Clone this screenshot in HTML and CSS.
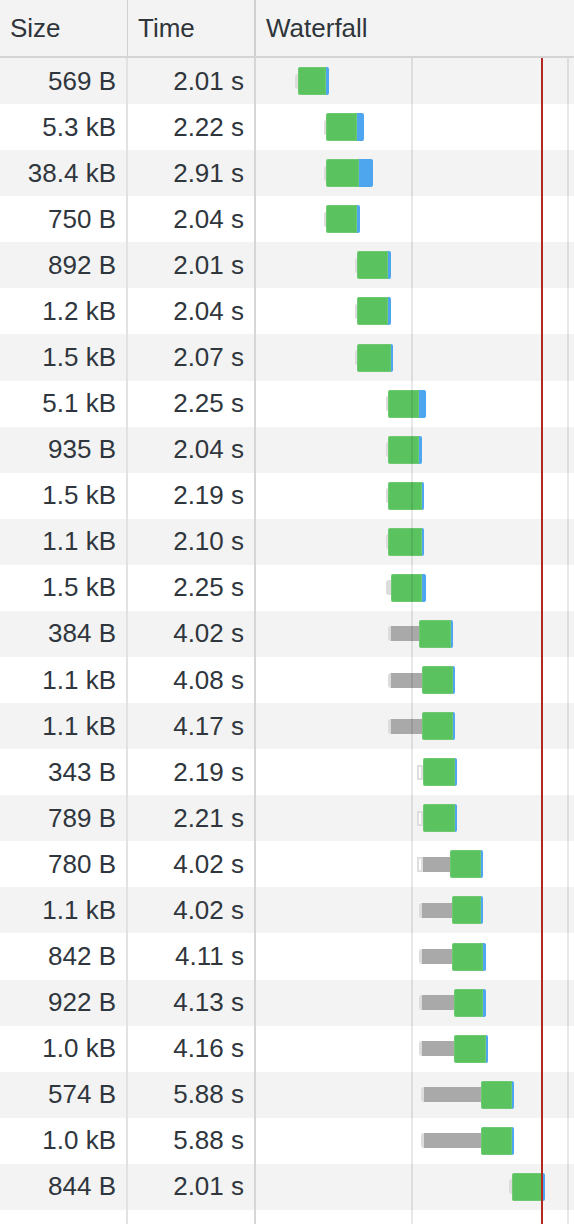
FILE: index.html
```html
<!DOCTYPE html>
<html>
<head>
<meta charset="utf-8">
<link rel="stylesheet" href="styles.css">
</head>
<body>
<div class="table">
  <div class="header">
    <div class="hc c1">Size</div>
    <div class="hc c2">Time</div>
    <div class="hc c3">Waterfall</div>
  </div>
  <div class="tbody">
    <div class="row"><div class="c c1">569 B</div><div class="c c2">2.01 s</div><div class="c c3"><div class="bar" style="left:39px"><i class="stub" style="width:3px"></i><i class="g" style="width:28px"></i><i class="b" style="width:3px"></i></div></div></div>
    <div class="row"><div class="c c1">5.3 kB</div><div class="c c2">2.22 s</div><div class="c c3"><div class="bar" style="left:68px"><i class="stub" style="width:2px"></i><i class="g" style="width:31px"></i><i class="b" style="width:7px"></i></div></div></div>
    <div class="row"><div class="c c1">38.4 kB</div><div class="c c2">2.91 s</div><div class="c c3"><div class="bar" style="left:68px"><i class="stub" style="width:2px"></i><i class="g" style="width:33px"></i><i class="b" style="width:14px"></i></div></div></div>
    <div class="row"><div class="c c1">750 B</div><div class="c c2">2.04 s</div><div class="c c3"><div class="bar" style="left:68px"><i class="stub" style="width:2px"></i><i class="g" style="width:31px"></i><i class="b" style="width:3px"></i></div></div></div>
    <div class="row"><div class="c c1">892 B</div><div class="c c2">2.01 s</div><div class="c c3"><div class="bar" style="left:99px"><i class="stub" style="width:2px"></i><i class="g" style="width:31px"></i><i class="b" style="width:3px"></i></div></div></div>
    <div class="row"><div class="c c1">1.2 kB</div><div class="c c2">2.04 s</div><div class="c c3"><div class="bar" style="left:99px"><i class="stub" style="width:2px"></i><i class="g" style="width:31px"></i><i class="b" style="width:3px"></i></div></div></div>
    <div class="row"><div class="c c1">1.5 kB</div><div class="c c2">2.07 s</div><div class="c c3"><div class="bar" style="left:99px"><i class="stub" style="width:2px"></i><i class="g" style="width:34px"></i><i class="b" style="width:2px"></i></div></div></div>
    <div class="row"><div class="c c1">5.1 kB</div><div class="c c2">2.25 s</div><div class="c c3"><div class="bar" style="left:130px"><i class="stub" style="width:2px"></i><i class="g" style="width:31px"></i><i class="b" style="width:7px"></i></div></div></div>
    <div class="row"><div class="c c1">935 B</div><div class="c c2">2.04 s</div><div class="c c3"><div class="bar" style="left:130px"><i class="stub" style="width:2px"></i><i class="g" style="width:31px"></i><i class="b" style="width:3px"></i></div></div></div>
    <div class="row"><div class="c c1">1.5 kB</div><div class="c c2">2.19 s</div><div class="c c3"><div class="bar" style="left:130px"><i class="stub" style="width:2px"></i><i class="g" style="width:34px"></i><i class="b" style="width:2px"></i></div></div></div>
    <div class="row"><div class="c c1">1.1 kB</div><div class="c c2">2.10 s</div><div class="c c3"><div class="bar" style="left:130px"><i class="stub" style="width:2px"></i><i class="g" style="width:34px"></i><i class="b" style="width:2px"></i></div></div></div>
    <div class="row"><div class="c c1">1.5 kB</div><div class="c c2">2.25 s</div><div class="c c3"><div class="bar" style="left:130px"><i class="stub" style="width:5px"></i><i class="g" style="width:31px"></i><i class="b" style="width:4px"></i></div></div></div>
    <div class="row"><div class="c c1">384 B</div><div class="c c2">4.02 s</div><div class="c c3"><div class="bar" style="left:132px"><i class="stub" style="width:3px"></i><i class="w" style="width:28px"></i><i class="g" style="width:32px"></i><i class="b" style="width:2px"></i></div></div></div>
    <div class="row"><div class="c c1">1.1 kB</div><div class="c c2">4.08 s</div><div class="c c3"><div class="bar" style="left:132px"><i class="stub" style="width:3px"></i><i class="w" style="width:31px"></i><i class="g" style="width:31px"></i><i class="b" style="width:2px"></i></div></div></div>
    <div class="row"><div class="c c1">1.1 kB</div><div class="c c2">4.17 s</div><div class="c c3"><div class="bar" style="left:132px"><i class="stub" style="width:3px"></i><i class="w" style="width:31px"></i><i class="g" style="width:31px"></i><i class="b" style="width:2px"></i></div></div></div>
    <div class="row"><div class="c c1">343 B</div><div class="c c2">2.19 s</div><div class="c c3"><div class="bar" style="left:161px"><i class="q" style="width:6px"></i><i class="g" style="width:32px"></i><i class="b" style="width:2px"></i></div></div></div>
    <div class="row"><div class="c c1">789 B</div><div class="c c2">2.21 s</div><div class="c c3"><div class="bar" style="left:161px"><i class="q" style="width:6px"></i><i class="g" style="width:32px"></i><i class="b" style="width:2px"></i></div></div></div>
    <div class="row"><div class="c c1">780 B</div><div class="c c2">4.02 s</div><div class="c c3"><div class="bar" style="left:161px"><i class="q" style="width:6px"></i><i class="w" style="width:27px"></i><i class="g" style="width:31px"></i><i class="b" style="width:2px"></i></div></div></div>
    <div class="row"><div class="c c1">1.1 kB</div><div class="c c2">4.02 s</div><div class="c c3"><div class="bar" style="left:163px"><i class="stub" style="width:3px"></i><i class="w" style="width:30px"></i><i class="g" style="width:29px"></i><i class="b" style="width:2px"></i></div></div></div>
    <div class="row"><div class="c c1">842 B</div><div class="c c2">4.11 s</div><div class="c c3"><div class="bar" style="left:163px"><i class="stub" style="width:3px"></i><i class="w" style="width:30px"></i><i class="g" style="width:31px"></i><i class="b" style="width:3px"></i></div></div></div>
    <div class="row"><div class="c c1">922 B</div><div class="c c2">4.13 s</div><div class="c c3"><div class="bar" style="left:163px"><i class="stub" style="width:3px"></i><i class="w" style="width:32px"></i><i class="g" style="width:29px"></i><i class="b" style="width:3px"></i></div></div></div>
    <div class="row"><div class="c c1">1.0 kB</div><div class="c c2">4.16 s</div><div class="c c3"><div class="bar" style="left:163px"><i class="stub" style="width:3px"></i><i class="w" style="width:32px"></i><i class="g" style="width:32px"></i><i class="b" style="width:2px"></i></div></div></div>
    <div class="row"><div class="c c1">574 B</div><div class="c c2">5.88 s</div><div class="c c3"><div class="bar" style="left:165px"><i class="stub" style="width:3px"></i><i class="w" style="width:57px"></i><i class="g" style="width:31px"></i><i class="b" style="width:2px"></i></div></div></div>
    <div class="row"><div class="c c1">1.0 kB</div><div class="c c2">5.88 s</div><div class="c c3"><div class="bar" style="left:165px"><i class="stub" style="width:3px"></i><i class="w" style="width:57px"></i><i class="g" style="width:31px"></i><i class="b" style="width:2px"></i></div></div></div>
    <div class="row"><div class="c c1">844 B</div><div class="c c2">2.01 s</div><div class="c c3"><div class="bar" style="left:253px"><i class="stub" style="width:3px"></i><i class="g" style="width:30px"></i><i class="b" style="width:3px"></i></div></div></div>
    <div class="row filler"><div class="c c1"></div><div class="c c2"></div><div class="c c3"></div></div>
    <div class="overlay">
      <span class="grid" style="left:155px"></span>
      <span class="grid" style="left:311px"></span>
      <span class="marker" style="left:285px"></span>
    </div>
  </div>
</div>
</body>
</html>
```

FILE: styles.css
```css
html, body {
  margin: 0;
  padding: 0;
  height: 1224px;
  background: #ffffff;
}

body {
  font-family: "Liberation Sans", Arial, Helvetica, sans-serif;
  font-size: 26px;
  color: #30363d;
  overflow: hidden;
}

.table {
  width: 574px;
  height: 1224px;
  display: flex;
  flex-direction: column;
}

.header {
  display: flex;
  height: 56px;
  flex: none;
  background: #f3f3f3;
  border-bottom: 2px solid #d4d4d4;
}

.hc {
  display: flex;
  align-items: center;
  padding-left: 10px;
  box-sizing: border-box;
  color: #2f353b;
}

.c1 {
  width: 128px;
  flex: none;
  box-sizing: border-box;
  border-right: 1px solid #cfcfcf;
}

.c2 {
  width: 128px;
  flex: none;
  box-sizing: border-box;
  border-right: 2px solid #cfcfcf;
}

.c3 {
  flex: 1;
  box-sizing: border-box;
}

.tbody {
  flex: 1;
  position: relative;
  display: flex;
  flex-direction: column;
}

.row {
  display: flex;
  height: 46.08px;
  flex: none;
}

.row:nth-child(odd) {
  background: #f3f3f3;
}

.row.filler {
  flex: 1;
  background: #ffffff;
}

.c {
  display: flex;
  align-items: center;
}

.row .c1 {
  justify-content: flex-end;
  padding-right: 10px;
  border-right-color: #e2e2e2;
  border-right-width: 2px;
}

.row .c2 {
  justify-content: flex-end;
  padding-right: 10px;
  border-right-color: #d6d6d6;
}

.row .c3 {
  position: relative;
}

.bar {
  position: absolute;
  top: 0;
  height: 100%;
  display: flex;
  align-items: center;
}

.bar i {
  display: block;
  flex: none;
}

.stub {
  height: 15px;
  background: #dcdcdc;
  border-radius: 3px 0 0 3px;
}

.q {
  height: 15px;
  box-sizing: border-box;
  border: 2px solid #dedede;
  background: #ffffff;
}

.w {
  height: 15px;
  background: #a9a9a9;
}

.g {
  height: 28px;
  background: #5ac35f;
  border-radius: 2px 0 0 2px;
  box-shadow: inset 0 0 0 1px rgba(255,255,255,0.12);
}

.b {
  height: 28px;
  background: #4ea6ef;
  border-radius: 0 2px 2px 0;
}

.overlay {
  position: absolute;
  top: 0;
  bottom: 0;
  left: 256px;
  right: 0;
  pointer-events: none;
}

.grid {
  position: absolute;
  top: 0;
  bottom: 0;
  width: 2px;
  background: rgba(0, 0, 0, 0.09);
}

.marker {
  position: absolute;
  top: 0;
  bottom: 0;
  width: 2px;
  background: #b02a22;
}
```
